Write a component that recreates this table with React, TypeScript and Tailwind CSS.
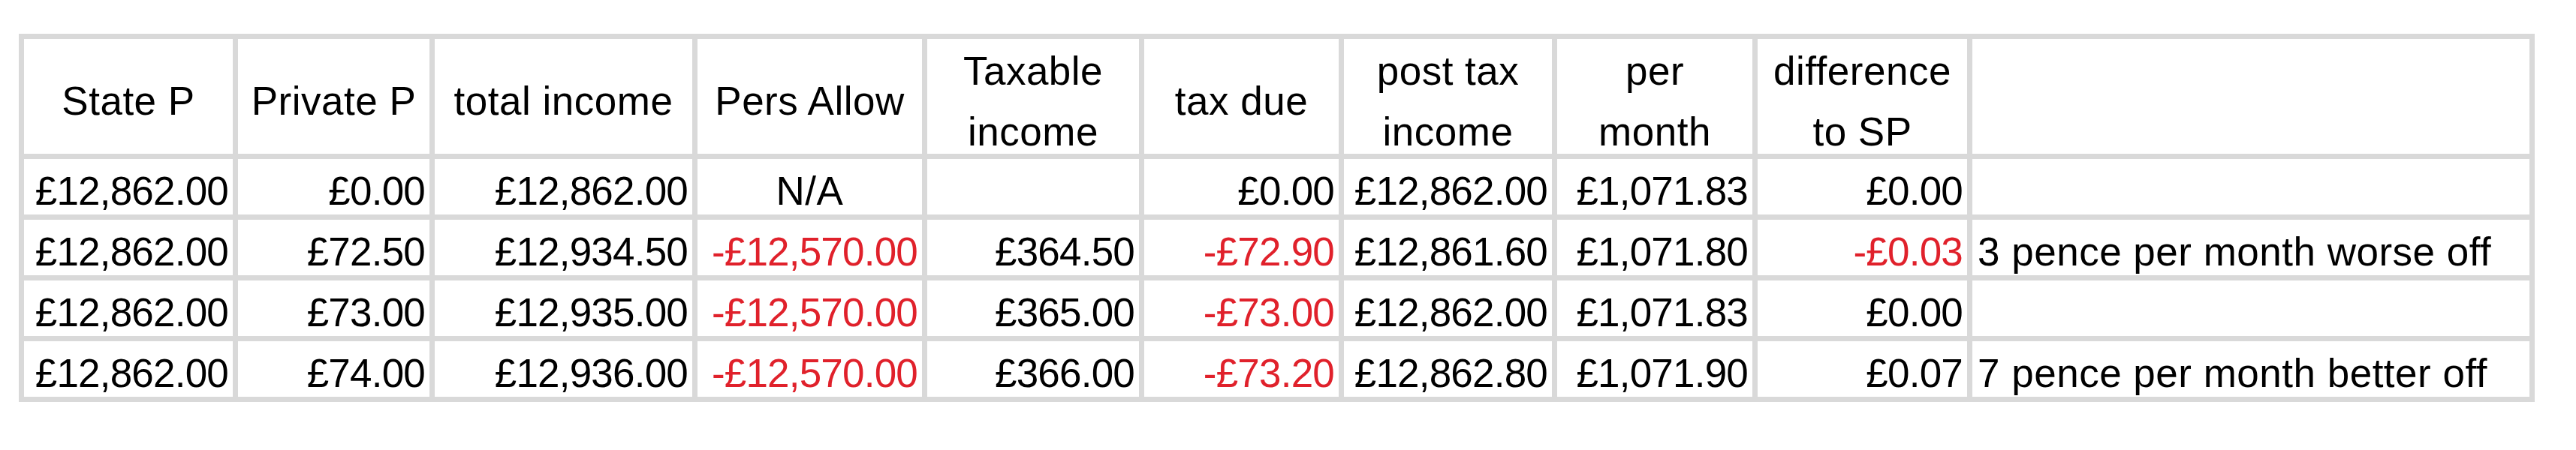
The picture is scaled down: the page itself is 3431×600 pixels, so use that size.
type Cell = { text: string; red?: boolean; align?: 'right' | 'center' | 'left' };

const headers: string[][] = [
  ['State P'],
  ['Private P'],
  ['total income'],
  ['Pers Allow'],
  ['Taxable', 'income'],
  ['tax due'],
  ['post tax', 'income'],
  ['per', 'month'],
  ['difference', 'to SP'],
  [],
];

const r = (text: string): Cell => ({ text });
const neg = (text: string): Cell => ({ text, red: true });

const rows: Cell[][] = [
  [
    r('£12,862.00'),
    r('£0.00'),
    r('£12,862.00'),
    { text: 'N/A', align: 'center' },
    r(''),
    r('£0.00'),
    r('£12,862.00'),
    r('£1,071.83'),
    r('£0.00'),
    { text: '', align: 'left' },
  ],
  [
    r('£12,862.00'),
    r('£72.50'),
    r('£12,934.50'),
    neg('-£12,570.00'),
    r('£364.50'),
    neg('-£72.90'),
    r('£12,861.60'),
    r('£1,071.80'),
    neg('-£0.03'),
    { text: '3 pence per month worse off', align: 'left' },
  ],
  [
    r('£12,862.00'),
    r('£73.00'),
    r('£12,935.00'),
    neg('-£12,570.00'),
    r('£365.00'),
    neg('-£73.00'),
    r('£12,862.00'),
    r('£1,071.83'),
    r('£0.00'),
    { text: '', align: 'left' },
  ],
  [
    r('£12,862.00'),
    r('£74.00'),
    r('£12,936.00'),
    neg('-£12,570.00'),
    r('£366.00'),
    neg('-£73.20'),
    r('£12,862.80'),
    r('£1,071.90'),
    r('£0.07'),
    { text: '7 pence per month better off', align: 'left' },
  ],
];

function DataCell({ cell }: { cell: Cell }) {
  const align = cell.align ?? 'right';
  // numbers sit a touch tighter than the prose, like the sheet's font
  const spacing = align === 'right' ? 'tracking-[-0.8px]' : 'tracking-[0.5px]';
  return (
    <div
      className={`h-[74px] bg-white flex items-end pb-[1px] leading-[60px] whitespace-nowrap ${spacing} ${
        align === 'right' ? 'justify-end pr-[6px]' : align === 'center' ? 'justify-center' : 'justify-start pl-[7px]'
      } ${cell.red ? 'text-[#e0212b]' : 'text-black'}`}
    >
      {cell.text}
    </div>
  );
}

export default function App() {
  return (
    <div
      className="w-[3431px] h-[600px] bg-white pt-[45px] pl-[25px] text-[53px]"
      style={{ fontFamily: '"Liberation Sans", Arial, sans-serif' }}
    >
      <div className="w-fit grid grid-cols-[278px_255px_343px_299px_282px_259px_277px_260px_279px_742px] gap-[7px] p-[7px] bg-[#d9d9d9]">
        {headers.map((lines, i) => (
          <div
            key={`h${i}`}
            className="h-[153px] bg-white flex flex-col items-center justify-center pt-[12px] leading-[81px] tracking-[0.5px] text-black text-center whitespace-nowrap"
          >
            {lines.map((line) => (
              <span key={line}>{line}</span>
            ))}
          </div>
        ))}
        {rows.map((row, ri) =>
          row.map((cell, ci) => <DataCell key={`${ri}-${ci}`} cell={cell} />)
        )}
      </div>
    </div>
  );
}
